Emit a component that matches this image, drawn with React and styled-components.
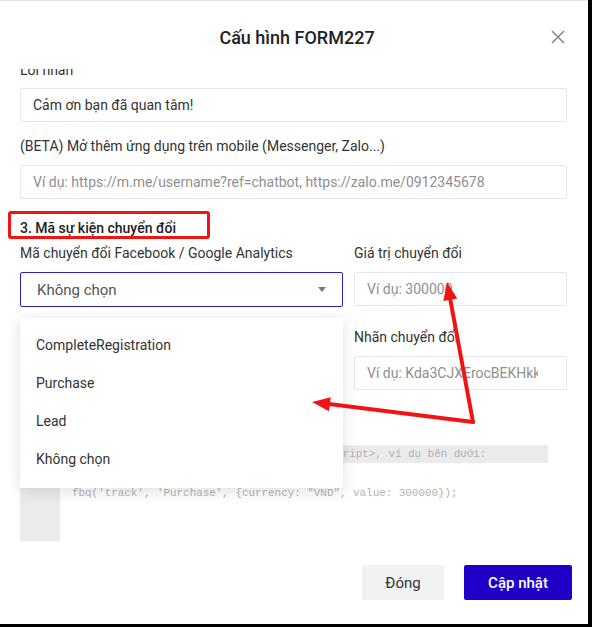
import React from "react";
import styled, { createGlobalStyle } from "styled-components";

const Global = createGlobalStyle`
  html, body { margin: 0; padding: 0; background: #000; }
  body { font-family: Roboto, "Noto Sans", sans-serif; }
  * { box-sizing: border-box; }
`;

const Modal = styled.div`
  position: relative;
  width: 588px;
  height: 624px;
  background: #fff;
  border-top: 1px solid #e4e4e4;
  display: flex;
  flex-direction: column;
  overflow: hidden;
`;

const Header = styled.div`
  height: 68px;
  flex: none;
  display: grid;
  grid-template-columns: 1fr auto 1fr;
  align-items: center;
  padding: 4px 16px 0 20px;
`;

const Title = styled.h2`
  grid-column: 2;
  margin: 0;
  font-size: 18px;
  font-weight: 500;
  color: #222;
  padding-left: 2px;
`;

const Close = styled.button`
  grid-column: 3;
  justify-self: end;
  width: 24px;
  height: 24px;
  border: 0;
  background: none;
  padding: 0;
  margin-right: 2px;
  display: flex;
  align-items: center;
  justify-content: center;
  color: #888;
`;

const Body = styled.div`
  flex: 1;
  overflow: hidden;
  padding: 0 21px 0 20px;
`;

const Content = styled.div`
  position: relative;
  margin-top: -9px;
  display: flex;
  flex-direction: column;
`;

const Label = styled.div`
  font-size: 14px;
  line-height: 20px;
  color: #333;
  margin-bottom: ${(p) => p.$mb ?? 8}px;
  margin-top: ${(p) => p.$mt ?? 0}px;
  white-space: nowrap;
`;

const Input = styled.input`
  display: block;
  width: 100%;
  height: 34px;
  border: 1px solid #e6e6e6;
  border-radius: 2px;
  padding: 0 ${(p) => p.$pr ?? 12}px 0 12px;
  font-family: inherit;
  font-size: 14px;
  color: #333;
  outline: none;
  background: #fff;
  &::placeholder { color: #8f8f8f; }
`;

const SectionTitle = styled.div`
  margin-top: 19px;
  font-size: 14px;
  font-weight: 500;
  line-height: 20px;
  color: #222;
`;

const Grid = styled.div`
  display: grid;
  grid-template-columns: 323px 1fr;
  column-gap: 11px;
  row-gap: 20px;
  margin-top: 5px;
`;

const Field = styled.div`
  position: relative;
  display: flex;
  flex-direction: column;
`;

const Select = styled.div`
  height: 35px;
  border: 1px solid #2b1fc2;
  border-radius: 2px;
  display: flex;
  align-items: center;
  justify-content: space-between;
  padding: 0 16px 0 16px;
  font-size: 15px;
  color: #555;
`;

const Caret = styled.span`
  width: 0;
  height: 0;
  border-left: 4px solid transparent;
  border-right: 4px solid transparent;
  border-top: 5px solid #777;
`;

const Menu = styled.ul`
  position: absolute;
  left: 0;
  top: calc(100% + 11px);
  width: 323px;
  margin: 0;
  padding: 8px 0 10px;
  list-style: none;
  background: #fff;
  box-shadow: 0 3px 14px rgba(0, 0, 0, 0.13);
  z-index: 5;
`;

const MenuItem = styled.li`
  height: 38px;
  display: flex;
  align-items: center;
  padding-left: 16px;
  font-size: 14px;
  color: #333;
`;

const CodeHint = styled.div`
  margin-top: 55px;
  width: 528px;
  height: 18px;
  background: #ebebeb;
  font-family: "Liberation Mono", "DejaVu Sans Mono", monospace;
  font-size: 10.9px;
  line-height: 18px;
  color: #b0b0b0;
  padding-left: 22px;
  white-space: nowrap;
  overflow: hidden;
`;

const CodeBlock = styled.div`
  display: flex;
  height: 78px;
`;

const Gutter = styled.div`
  width: 40px;
  flex: none;
  background: #ebebeb;
`;

const Code = styled.pre`
  margin: 0;
  padding: 23px 0 0 12px;
  font-family: "Liberation Mono", "DejaVu Sans Mono", monospace;
  font-size: 10.9px;
  line-height: 14px;
  color: #b3b3b3;
`;

const Footer = styled.div`
  flex: none;
  height: 79px;
  display: flex;
  justify-content: flex-end;
  align-items: flex-start;
  gap: 20px;
  padding: 20px 16px 0 0;
`;

const Button = styled.button`
  height: 35px;
  width: ${(p) => p.$w}px;
  border: 0;
  border-radius: 2px;
  font-family: inherit;
  font-size: 15px;
  font-weight: ${(p) => (p.$primary ? 500 : 400)};
  background: ${(p) => (p.$primary ? "#1e00c6" : "#f1f2f4")};
  color: ${(p) => (p.$primary ? "#fff" : "#333")};
`;

const Annotation = styled.svg`
  position: absolute;
  left: 0;
  top: 0;
  pointer-events: none;
  z-index: 10;
`;

export default function App() {
  return (
    <>
      <Global />
      <Modal>
        <Header>
          <Title>Cấu hình FORM227</Title>
          <Close aria-label="close">
            <svg width="14" height="14" viewBox="0 0 14 14">
              <path d="M1 1L13 13M13 1L1 13" stroke="#888" strokeWidth="1.6" />
            </svg>
          </Close>
        </Header>
        <Body>
          <Content>
            <Label>Lời nhắn</Label>
            <Input defaultValue="Cảm ơn bạn đã quan tâm!" />
            <Label $mt={14} $mb={9}>
              (BETA) Mở thêm ứng dụng trên mobile (Messenger, Zalo...)
            </Label>
            <Input placeholder="Ví dụ: https://m.me/username?ref=chatbot, https://zalo.me/0912345678" />
            <SectionTitle>3. Mã sự kiện chuyển đổi</SectionTitle>
            <Grid>
              <Field>
                <Label $mb={9}>Mã chuyển đổi Facebook / Google Analytics</Label>
                <Select>
                  <span>Không chọn</span>
                  <Caret />
                </Select>
                <Menu>
                  <MenuItem>CompleteRegistration</MenuItem>
                  <MenuItem>Purchase</MenuItem>
                  <MenuItem>Lead</MenuItem>
                  <MenuItem>Không chọn</MenuItem>
                </Menu>
              </Field>
              <Field>
                <Label $mb={9}>Giá trị chuyển đổi</Label>
                <Input placeholder="Ví dụ: 300000" />
              </Field>
              <Field>
                <Label $mb={9}>Tiền tệ</Label>
                <Input placeholder="VND" />
              </Field>
              <Field>
                <Label $mb={9}>Nhãn chuyển đổi</Label>
                <Input $pr={28} placeholder="Ví dụ: Kda3CJXErocBEKHkkQE" />
              </Field>
            </Grid>
            <CodeHint>
              Sao chép đoạn mã sau và dán vào trước thẻ &lt;/script&gt;, ví dụ bên dưới:
            </CodeHint>
            <CodeBlock>
              <Gutter />
              <Code>{`fbq('track', 'Purchase', {currency: "VND", value: 300000});`}</Code>
            </CodeBlock>
          </Content>
        </Body>
        <Footer>
          <Button $w={82}>Đóng</Button>
          <Button $w={108} $primary>
            Cập nhật
          </Button>
        </Footer>
        <Annotation width="588" height="624" viewBox="0 0 588 624">
          <rect x="9.5" y="211.5" width="199" height="25" rx="1.5" fill="none" stroke="#f01414" strokeWidth="3" />
          <line x1="473" y1="421" x2="450" y2="297" stroke="#f01414" strokeWidth="4" strokeLinecap="round" />
          <polygon points="447,281 457.2,297.4 443.4,300" fill="#f01414" />
          <line x1="473" y1="421" x2="329" y2="403" stroke="#f01414" strokeWidth="4" strokeLinecap="round" />
          <polygon points="312,401 330.7,396.3 329,410.2" fill="#f01414" />
        </Annotation>
      </Modal>
    </>
  );
}
